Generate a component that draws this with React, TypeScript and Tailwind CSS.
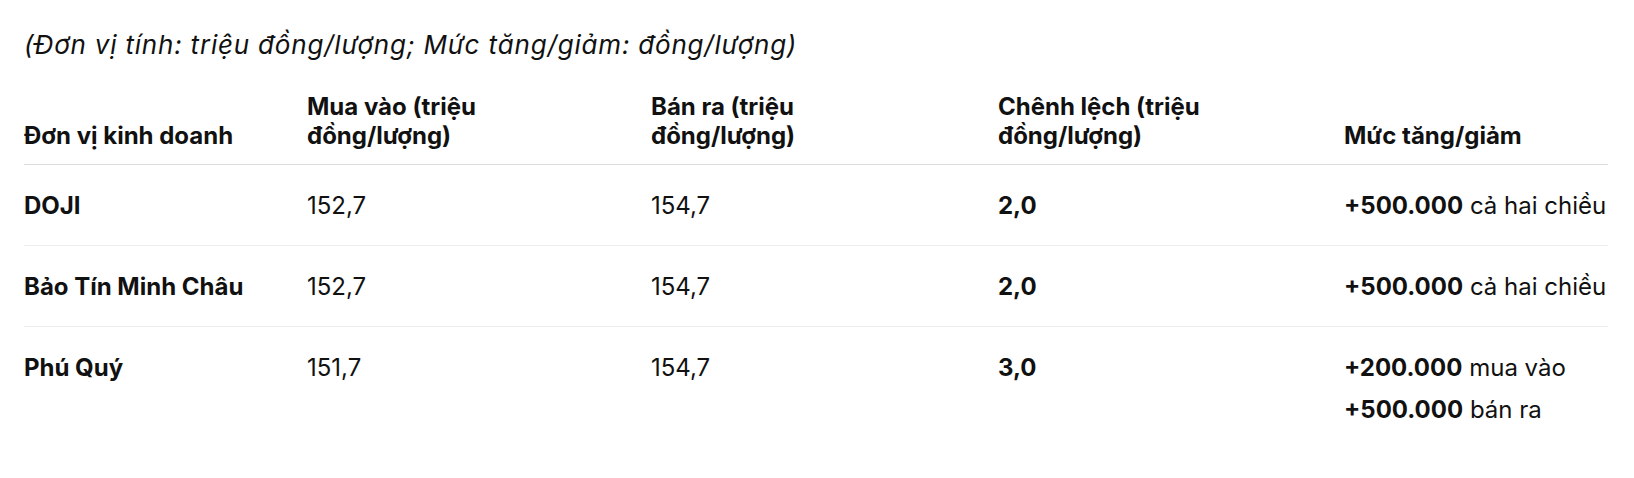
import React from "react";

const rows = [
  { name: "DOJI", buy: "152,7", sell: "154,7", diff: "2,0", change: [["+500.000", " cả hai chiều"]] },
  { name: "Bảo Tín Minh Châu", buy: "152,7", sell: "154,7", diff: "2,0", change: [["+500.000", " cả hai chiều"]] },
  {
    name: "Phú Quý",
    buy: "151,7",
    sell: "154,7",
    diff: "3,0",
    change: [
      ["+200.000", " mua vào"],
      ["+500.000", " bán ra"],
    ],
  },
];

export default function App() {
  return (
    <div className="min-h-[478px] bg-white text-[#111111] font-['Inter','Liberation_Sans',sans-serif]">
      <div className="ml-6 w-[1584px] overflow-hidden pt-[28px]">
        <p className="text-[26px] leading-[33px] italic tracking-[0.8px] whitespace-nowrap">
          (Đơn vị tính: triệu đồng/lượng; Mức tăng/giảm: đồng/lượng)
        </p>
        <div className="mt-[21px] grid grid-cols-[283px_344px_347px_346px_1fr] border-b border-[#dcdcdc] pt-[10px] pb-[14px] text-[24px] leading-[29px] font-bold">
          <div className="self-end">Đơn vị kinh doanh</div>
          <div className="self-end">
            Mua vào (triệu
            <br />
            đồng/lượng)
          </div>
          <div className="self-end">
            Bán ra (triệu
            <br />
            đồng/lượng)
          </div>
          <div className="self-end">
            Chênh lệch (triệu
            <br />
            đồng/lượng)
          </div>
          <div className="self-end whitespace-nowrap">Mức tăng/giảm</div>
        </div>
        {rows.map((r, i) => (
          <div
            key={r.name}
            className={
              i < rows.length - 1
                ? "grid grid-cols-[283px_344px_347px_346px_1fr] border-b border-[#ededed] pt-[24px] pb-[23px] text-[24px] leading-[33px]"
                : "grid grid-cols-[283px_344px_347px_346px_1fr] pt-[24px] pb-[23px] text-[24px] leading-[33px]"
            }
          >
            <div className="font-bold whitespace-nowrap">{r.name}</div>
            <div>{r.buy}</div>
            <div>{r.sell}</div>
            <div className="font-bold">{r.diff}</div>
            <div className="flex flex-col gap-[9px] whitespace-nowrap">
              {r.change.map(([a, b]) => (
                <div key={a + b}>
                  <span className="font-bold">{a}</span>
                  {b}
                </div>
              ))}
            </div>
          </div>
        ))}
      </div>
    </div>
  );
}
